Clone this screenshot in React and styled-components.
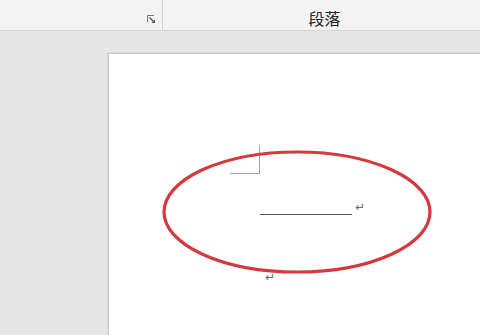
import React from "react";
import styled, { createGlobalStyle } from "styled-components";

const GlobalStyle = createGlobalStyle`
  html, body {
    margin: 0;
    padding: 0;
    width: 480px;
    height: 335px;
    overflow: hidden;
    font-family: "Noto Sans CJK SC", "Noto Sans", sans-serif;
  }
  #root {
    height: 100%;
  }
`;

const Screen = styled.div`
  display: flex;
  flex-direction: column;
  height: 335px;
  background: #e6e6e6;
`;

const Ribbon = styled.div`
  display: flex;
  height: 30px;
  background: #f3f3f3;
  border-bottom: 1px solid #d4d4d4;
  flex-shrink: 0;
`;

const Group = styled.div`
  position: relative;
  display: flex;
  align-items: center;
  justify-content: center;
  width: ${(p) => (p.$width ? `${p.$width}px` : "auto")};
  flex: ${(p) => (p.$width ? "none" : 1)};
  border-right: ${(p) => (p.$divider ? "1px solid #d0d0d0" : "none")};
`;

const GroupTitle = styled.span`
  font-size: 16px;
  color: #262626;
  padding-top: 5px;
  margin-left: 6px;
`;

const Launcher = styled.button`
  position: absolute;
  right: 5px;
  bottom: 5px;
  width: 11px;
  height: 11px;
  padding: 0;
  border: none;
  background: none;
  display: flex;
`;

const Workspace = styled.div`
  flex: 1;
  display: flex;
  padding: 22px 0 0 108px;
`;

const Page = styled.div`
  position: relative;
  flex: 1;
  background: #fff;
  border-left: 1px solid #c8c8c8;
  border-top: 1px solid #c8c8c8;
  box-shadow: -1px -1px 0 #dadada;
  padding: 91px 0 0 151px;
`;

const CornerMark = styled.div`
  width: 29px;
  height: 28px;
  margin-left: -30px;
  border-right: 1px solid #a6a6a6;
  border-bottom: 1px solid #a6a6a6;
`;

const Line = styled.div`
  display: flex;
  align-items: flex-end;
  margin-top: ${(p) => p.$top}px;
  margin-left: ${(p) => p.$indent || 0}px;
  height: 14px;
`;

const Underline = styled.span`
  display: inline-block;
  width: 92px;
  height: 1px;
  background: #555;
  margin-bottom: 1px;
`;

const Mark = styled.span`
  font-family: "DejaVu Sans", sans-serif;
  font-size: 12px;
  line-height: 12px;
  color: #6a6a6a;
  margin-left: 3px;
  margin-bottom: 3px;
`;

const Annotation = styled.svg`
  position: absolute;
  left: 0;
  top: 0;
  pointer-events: none;
`;

export default function App() {
  return (
    <Screen>
      <GlobalStyle />
      <Ribbon>
        <Group $width={162} $divider>
          <Launcher aria-label="字体设置">
            <svg width="11" height="11" viewBox="0 0 11 11">
              <path d="M1.5 8V1.5H8" fill="none" stroke="#777" strokeWidth="1" />
              <path d="M3.5 3.5L8.5 8.5" stroke="#555" strokeWidth="1.2" />
              <path d="M9 5.5V9H5.5Z" fill="#555" />
            </svg>
          </Launcher>
        </Group>
        <Group>
          <GroupTitle>段落</GroupTitle>
        </Group>
      </Ribbon>
      <Workspace>
        <Page>
          <CornerMark />
          <Line $top={28}>
            <Underline />
            <Mark>↵</Mark>
          </Line>
          <Line $top={56} $indent={2}>
            <Mark>↵</Mark>
          </Line>
          <Annotation width="372" height="282">
            <ellipse
              cx="188"
              cy="158"
              rx="133"
              ry="60"
              fill="none"
              stroke="#d43a3d"
              strokeWidth="3.2"
            />
          </Annotation>
        </Page>
      </Workspace>
    </Screen>
  );
}
